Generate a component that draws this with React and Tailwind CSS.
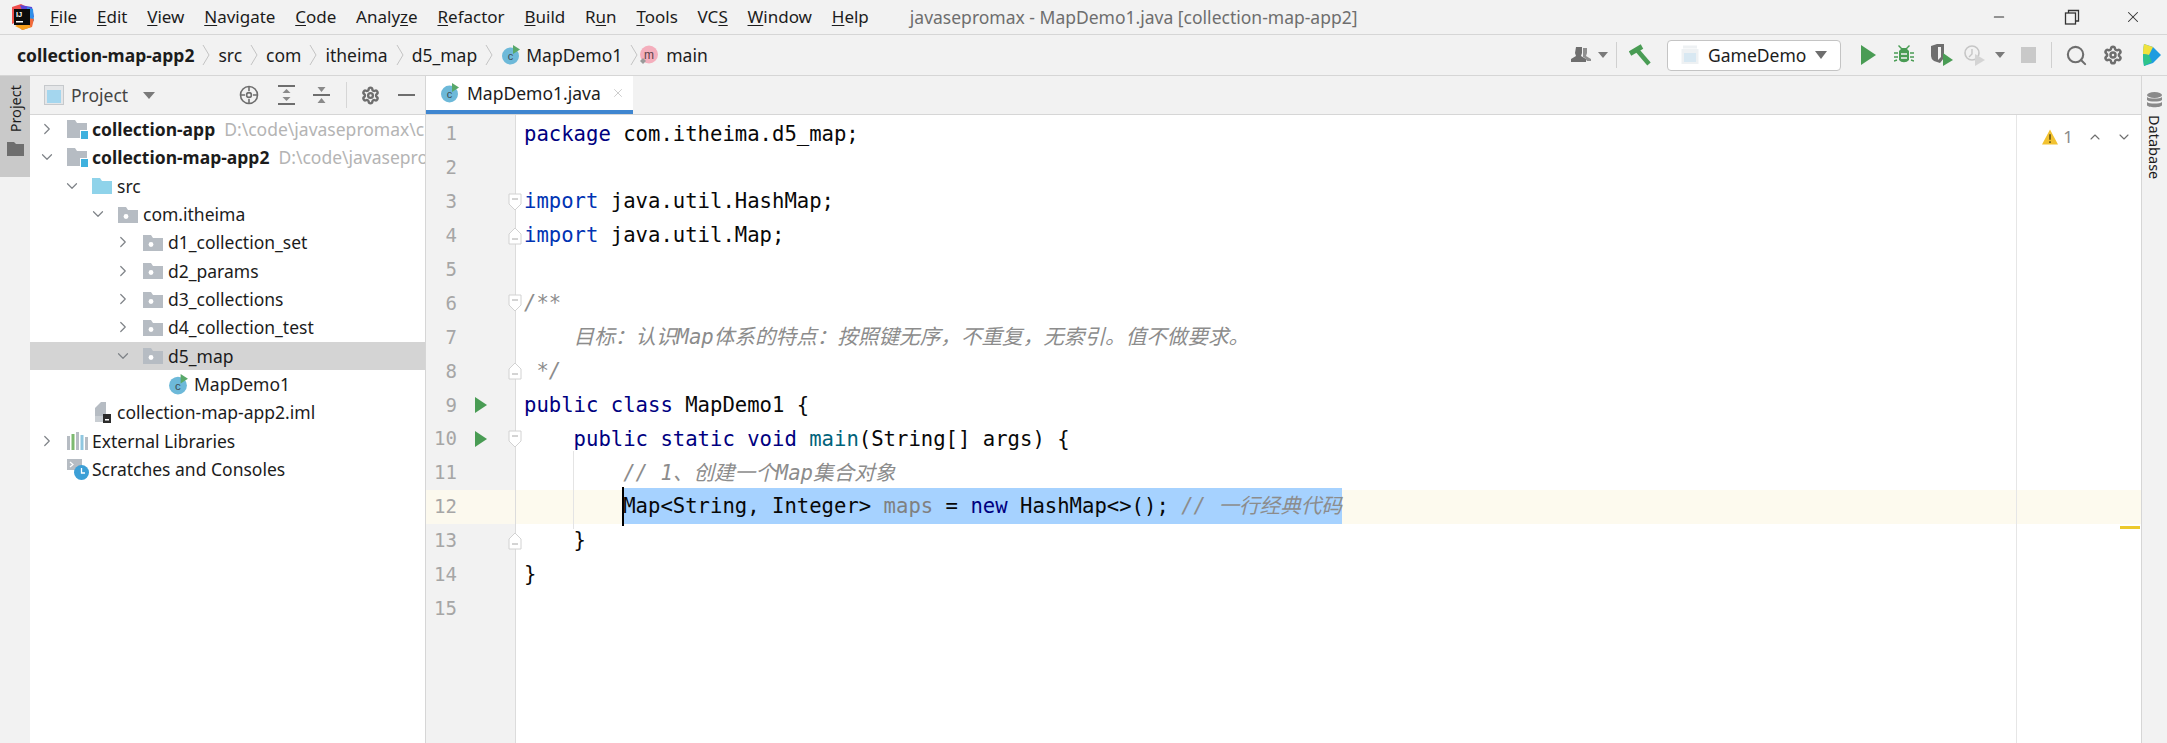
import React from "react";
import { ChevronRight, ChevronDown, ChevronUp, Search, Settings, X, Minus } from "lucide-react";

const uiFont = "font-['Noto_Sans','Noto_Sans_CJK_SC',sans-serif]";
const codeFont = "font-['DejaVu_Sans_Mono','Noto_Sans_CJK_SC',monospace]";

const menus = [
  ["", "F", "ile"],
  ["", "E", "dit"],
  ["", "V", "iew"],
  ["", "N", "avigate"],
  ["", "C", "ode"],
  ["Analy", "z", "e"],
  ["", "R", "efactor"],
  ["", "B", "uild"],
  ["R", "u", "n"],
  ["", "T", "ools"],
  ["VC", "S", ""],
  ["", "W", "indow"],
  ["", "H", "elp"],
];

const ClassIcon = ({ letter = "c", size = 20, fill = "#6db9d9", mark = true }) => (
  <svg width={size} height={size} viewBox="0 0 20 20" className="shrink-0">
    <circle cx="9.5" cy="11" r="8.5" fill={fill} />
    <text x="9.5" y="15" textAnchor="middle" fontSize="11" fontFamily="Liberation Sans" fill="#3d4b52">
      {letter}
    </text>
    {mark && <path d="M12 0l7 4.5-7 4.5z" fill="#59a869" />}
  </svg>
);

const Folder = ({ color = "#b6bcc3", dot = true }) => (
  <svg width="20" height="17" viewBox="0 0 20 17" className="shrink-0">
    <path d="M0 1h8l2 3h10v13H0z" fill={color} />
    {dot && <circle cx="8" cy="10.5" r="2.4" fill="#fff" />}
  </svg>
);

const ModuleFolder = () => (
  <svg width="21" height="20" viewBox="0 0 21 20" className="shrink-0">
    <path d="M0 1h8l2 3h10v9H13v6H0z" fill="#b6bcc3" />
    <rect x="13" y="11" width="8" height="8" fill="#fff" />
    <rect x="14" y="12" width="8" height="8" fill="#3fb1de" />
  </svg>
);

const treeRows = [
  { depth: 0, arrow: "right", icon: "module", name: "collection-app", bold: true, path: "D:\\code\\javasepromax\\collection-app" },
  { depth: 0, arrow: "down", icon: "module", name: "collection-map-app2", bold: true, path: "D:\\code\\javasepromax\\collection-map-app2" },
  { depth: 1, arrow: "down", icon: "src", name: "src" },
  { depth: 2, arrow: "down", icon: "pkg", name: "com.itheima" },
  { depth: 3, arrow: "right", icon: "pkg", name: "d1_collection_set" },
  { depth: 3, arrow: "right", icon: "pkg", name: "d2_params" },
  { depth: 3, arrow: "right", icon: "pkg", name: "d3_collections" },
  { depth: 3, arrow: "right", icon: "pkg", name: "d4_collection_test" },
  { depth: 3, arrow: "down", icon: "pkg", name: "d5_map", selected: true },
  { depth: 4, icon: "class", name: "MapDemo1", inset: true },
  { depth: 1, icon: "iml", name: "collection-map-app2.iml" },
  { depth: 0, arrow: "right", icon: "libs", name: "External Libraries" },
  { depth: 0, icon: "scratch", name: "Scratches and Consoles" },
];

const depthPad = ["pl-[7px]", "pl-[32px]", "pl-[58px]", "pl-[83px]", "pl-[83px]"];

const TreeIcon = ({ type }) => {
  if (type === "module") return <ModuleFolder />;
  if (type === "src") return <Folder color="#8fd3ea" dot={false} />;
  if (type === "pkg") return <Folder />;
  if (type === "class") return <ClassIcon size={21} />;
  if (type === "iml")
    return (
      <svg width="20" height="21" viewBox="0 0 20 21" className="shrink-0">
        <path d="M3 6l6-6h5v14H3z" fill="#b6bcc3" />
        <path d="M3 14h8v6H3z" fill="#c9ced3" />
        <rect x="11" y="12" width="8" height="9" fill="#2b2b2b" />
        <rect x="13" y="17" width="4" height="1.5" fill="#fff" />
      </svg>
    );
  if (type === "libs")
    return (
      <svg width="21" height="18" viewBox="0 0 21 18" className="shrink-0">
        <rect x="0" y="4" width="3" height="14" fill="#b6bcc3" />
        <rect x="4.5" y="2" width="3" height="16" fill="#7cb96f" />
        <rect x="9" y="0" width="3" height="18" fill="#b6bcc3" />
        <rect x="13.5" y="3" width="3" height="15" fill="#8fc7e0" />
        <rect x="18" y="5" width="3" height="13" fill="#b6bcc3" />
      </svg>
    );
  return (
    <svg width="22" height="21" viewBox="0 0 22 21" className="shrink-0">
      <rect x="0" y="0" width="15" height="11" fill="#b6bcc3" />
      <path d="M3 3l3 2.5L3 8" fill="none" stroke="#fff" strokeWidth="1.2" />
      <circle cx="14.5" cy="13.5" r="7.5" fill="#3c9fd6" />
      <path d="M14.5 9v5h3.5" fill="none" stroke="#fff" strokeWidth="1.3" />
    </svg>
  );
};

const TreeRow = ({ row }) => (
  <div
    className={`flex h-[28.33px] items-center whitespace-nowrap ${depthPad[row.depth]} ${
      row.selected ? "bg-[#d4d4d4]" : ""
    }`}
  >
    <div className={`flex shrink-0 justify-center ${row.inset ? "ml-[25px] w-[30px]" : "w-[20px]"}`}>
      {row.arrow === "right" && <ChevronRight size={18} strokeWidth={1.6} className="text-[#7f8388]" />}
      {row.arrow === "down" && <ChevronDown size={18} strokeWidth={1.6} className="text-[#7f8388]" />}
    </div>
    <div className={`flex shrink-0 ${row.inset ? "w-[26px]" : "ml-[10px] w-[25px]"}`}>
      <TreeIcon type={row.icon} />
    </div>
    <span className={`text-[17.5px] text-[#1c1c1c] ${row.bold ? "font-bold" : ""}`}>{row.name}</span>
    {row.path && <span className="ml-[9px] text-[17.5px] text-[#b4b4b4]">{row.path}</span>}
  </div>
);

const Kw = ({ children }) => <span className="text-[#000080]">{children}</span>;
const Imp = ({ children }) => <span className="text-[#0033b3]">{children}</span>;
const Doc = ({ children }) => <span className="italic text-[#8c8c8c]">{children}</span>;

const lines = [
  { code: <><Kw>package</Kw> com.itheima.d5_map;</> },
  { code: null },
  { code: <><Imp>import</Imp> java.util.HashMap;</>, fold: "open" },
  { code: <><Imp>import</Imp> java.util.Map;</>, fold: "close" },
  { code: null },
  { code: <Doc>/**</Doc>, fold: "open" },
  // full-width colon and comma, as in the source comment
  { code: <Doc>{"    目标\uFF1A认识Map体系的特点\uFF1A按照键无序\uFF0C不重复\uFF0C无索引。值不做要求。"}</Doc> },
  { code: <Doc>{" */"}</Doc>, fold: "close" },
  { code: <><Kw>public class</Kw> MapDemo1 {"{"}</>, run: true },
  {
    code: (
      <>
        {"    "}
        <Kw>public static void</Kw> <span className="text-[#00627a]">main</span>(String[] args) {"{"}
      </>
    ),
    run: true,
    fold: "open",
  },
  { code: <span className="italic text-[#8c8c8c]">{"        // 1、创建一个Map集合对象"}</span>, guide: true },
  {
    current: true,
    guide: true,
    code: (
      <>
        {"        "}
        <span className="bg-[#a6d2ff] py-[6px]">
          Map&lt;String, Integer&gt; <span className="text-[#808080]">maps</span> = <Kw>new</Kw> HashMap&lt;&gt;();{" "}
          <span className="italic text-[#8c8c8c]">// 一行经典代码</span>
        </span>
      </>
    ),
  },
  { code: <>{"    }"}</>, fold: "close" },
  { code: <>{"}"}</> },
  { code: null },
];

const FoldMark = ({ type }) => (
  <svg width="14" height="18" viewBox="0 0 14 18" className="absolute right-[-7px] z-10">
    {type === "open" ? (
      <path d="M1 1h12v10l-6 6-6-6z" fill="#fff" stroke="#d2d2d2" />
    ) : (
      <path d="M1 17h12V7L7 1 1 7z" fill="#fff" stroke="#d2d2d2" />
    )}
    <path d={type === "open" ? "M4 6h6" : "M4 12h6"} stroke="#a8a8a8" />
  </svg>
);

const CodeLine = ({ no, line }) => (
  <div className={`flex h-[33.9px] shrink-0 items-center ${line.current ? "bg-[#fdfaee]" : ""}`}>
    <div
      className={`relative flex h-full w-[90px] shrink-0 items-center border-r border-[#dcdcdc] ${
        line.current ? "bg-[#fcf9ee]" : "bg-[#f2f2f2]"
      }`}
    >
      <span className="w-[31px] text-right text-[19px] leading-none text-[#a6a6a6]">{no}</span>
      {line.run && (
        <svg width="12" height="16" viewBox="0 0 12 16" className="ml-[18px]">
          <path d="M0 0l12 8-12 8z" fill="#499c54" />
        </svg>
      )}
      {line.fold && <FoldMark type={line.fold} />}
    </div>
    <div className="relative ml-[8px] whitespace-pre text-[20.6px] leading-none text-[#080808]">
      {line.guide && <div className="absolute bottom-[-12px] left-[49px] top-[-12px] w-px bg-[#e4e4e4]" />}
      {line.current && <div className="absolute bottom-[-9px] left-[98px] top-[-9px] z-10 w-[2px] bg-black" />}
      <span className="relative">{line.code}</span>
    </div>
  </div>
);

function Crumb() {
  return (
    <svg width="8" height="22" viewBox="0 0 8 22" className="mx-[8px] shrink-0" fill="none" stroke="#c4c4c4">
      <path d="M1 1l6 10-6 10" />
    </svg>
  );
}

export default function App() {
  return (
    <div className={`flex h-[743px] w-[2167px] flex-col overflow-hidden bg-[#f2f2f2] text-[#1c1c1c] ${uiFont}`}>
      {/* Menu bar */}
      <div className="relative flex h-[35px] shrink-0 items-center border-b border-[#d6d6d6]">
        <svg width="24" height="26" viewBox="0 0 24 26" className="ml-[10px]">
          <path d="M2 3l9-3 6 3-4 12-11 5z" fill="#f0504f" />
          <path d="M10 1l12 2 2 10-8 4z" fill="#5b46d8" />
          <path d="M17 3l6 2 1 12-6 2z" fill="#2e8fe8" />
          <path d="M2 16l10 10 10-3 2-8-12-2z" fill="#f06a3a" />
          <path d="M5 22l8 4 8-3-6-6z" fill="#f9a01c" />
          <rect x="4" y="5" width="16" height="16" fill="#0b0b0b" />
          <text x="6" y="13" fontSize="7.5" fontWeight="700" fontFamily="Liberation Sans" fill="#fff">IJ</text>
          <rect x="6" y="17" width="7" height="1.5" fill="#fff" />
        </svg>
        <div className="ml-[16px] flex items-center gap-[19.8px] text-[17px]">
          {menus.map(([pre, key, post]) => (
            <span key={pre + key + post}>
              {pre}
              <span className="underline underline-offset-2">{key}</span>
              {post}
            </span>
          ))}
        </div>
        <span className="ml-[41px] text-[17.5px] text-[#6e6e6e]">javasepromax - MapDemo1.java [collection-map-app2]</span>
        <div className="ml-auto flex items-center">
          <Minus size={16} strokeWidth={1.6} className="text-[#333]" />
          <svg width="16" height="16" viewBox="0 0 16 16" className="ml-[57px]" fill="none" stroke="#333" strokeWidth="1.3">
            <rect x="1.5" y="4" width="10" height="11" />
            <path d="M4.5 4V1.5h10V12h-3" />
          </svg>
          <X size={18} strokeWidth={1.4} className="ml-[44px] mr-[25px] text-[#333]" />
        </div>
      </div>

      {/* Navigation bar */}
      <div className="flex h-[41px] shrink-0 items-center border-b border-[#d6d6d6] pl-[17px] text-[17.5px]">
        <span className="font-bold">collection-map-app2</span>
        <Crumb />
        <span>src</span>
        <Crumb />
        <span>com</span>
        <Crumb />
        <span>itheima</span>
        <Crumb />
        <span>d5_map</span>
        <Crumb />
        <ClassIcon size={20} />
        <span className="ml-[5px]">MapDemo1</span>
        <Crumb />
        <svg width="20" height="20" viewBox="0 0 20 20" className="-ml-[7px] shrink-0">
          <circle cx="10" cy="9.5" r="9" fill="#f4aebc" />
          <text x="10" y="14" textAnchor="middle" fontSize="12" fontFamily="Liberation Sans" fill="#5a4148">m</text>
          <path d="M4 13l3 3-3 3-3-3z" fill="#9a9a9a" />
        </svg>
        <span className="ml-[7px]">main</span>

        <div className="ml-auto flex items-center">
          <svg width="21" height="20" viewBox="0 0 21 20">
            <path d="M5 2h6v6l-1 3 5 3v3H0v-3l5-3-1-3z" fill="#6e6e6e" />
            <path d="M12 3h4v5l-1 3 5 3v2h-4l-2-3-2-1z" fill="#8f8f8f" />
          </svg>
          <svg width="10" height="6" viewBox="0 0 10 6" className="ml-[6px]"><path d="M0 0h10L5 6z" fill="#7a7a7a" /></svg>
          <div className="ml-[8px] h-[26px] w-px bg-[#d0d0d0]" />
          <svg width="22" height="22" viewBox="0 0 22 22" className="ml-[12px]" fill="none" stroke="#499c54">
            <path d="M1 9.5L13 2.5" strokeWidth="5" />
            <path d="M8 6l12 14" strokeWidth="4.5" />
          </svg>
          <div className="ml-[16px] flex h-[31px] w-[174px] items-center rounded-[4px] border border-[#c4c4c4] bg-white">
            <svg width="18" height="20" viewBox="0 0 18 20" className="ml-[13px]">
              <rect x="2" y="0.5" width="14" height="3" fill="#eef1f3" />
              <rect x="0.5" y="4" width="17" height="15" fill="#eef1f3" />
              <rect x="3" y="8" width="12" height="9" fill="#d8e8f2" />
            </svg>
            <span className="ml-[9px] text-[17.5px]">GameDemo</span>
            <svg width="12" height="8" viewBox="0 0 12 8" className="ml-auto mr-[13px]"><path d="M0 0h12L6 8z" fill="#6e6e6e" /></svg>
          </div>
          <svg width="15" height="20" viewBox="0 0 15 20" className="ml-[20px]"><path d="M0 0l15 10L0 20z" fill="#499c54" /></svg>
          <svg width="20" height="20" viewBox="0 0 20 20" className="ml-[18px]">
            <path d="M5 0l3 3h4l3-3 1 1-3 3 2 2v9a6 5 0 01-10 0V6l2-2-3-3z" fill="#499c54" />
            <path d="M0 8h4M0 12h4M0 16l3-1M16 8h4M16 12h4M20 16l-3-1" stroke="#499c54" strokeWidth="1.6" />
            <path d="M7 9h6M7 13h6" stroke="#f2f2f2" strokeWidth="1.6" />
          </svg>
          <svg width="23" height="22" viewBox="0 0 23 22" className="ml-[17px]">
            <path d="M0 2l6-2h7v14l-4 5-6-2q-3-2-3-5z" fill="#6e6e6e" />
            <path d="M7 3h3v10l-3 3z" fill="#f2f2f2" />
            <path d="M12 9l10 7-10 6z" fill="#499c54" />
          </svg>
          <svg width="21" height="22" viewBox="0 0 21 22" className="ml-[10px]" fill="none">
            <circle cx="8" cy="9" r="7" stroke="#c6c6c6" strokeWidth="1.6" />
            <path d="M8 5v5l-3 3" stroke="#c6c6c6" strokeWidth="1.4" />
            <path d="M11 10l10 6-10 6z" fill="#d4d4d4" />
          </svg>
          <svg width="10" height="6" viewBox="0 0 10 6" className="ml-[10px]"><path d="M0 0h10L5 6z" fill="#7a7a7a" /></svg>
          <div className="ml-[16px] h-[16px] w-[15px] bg-[#c9c9c9]" />
          <div className="ml-[15px] h-[26px] w-px bg-[#d0d0d0]" />
          <Search size={23} strokeWidth={2.2} className="ml-[13px] text-[#6e6e6e]" />
          <Settings size={20} strokeWidth={3} className="ml-[15px] text-[#6e6e6e]" />
          <svg width="20" height="22" viewBox="0 0 20 22" className="ml-[18px] mr-[6px]">
            <path d="M3 0l9 3 8 8-8 8-9 3q-2-11 0-22z" fill="#1f9ce0" />
            <path d="M3 0l9 3-4 8-6-1q0-6 1-10z" fill="#f0e23c" />
            <path d="M2 10l6 1 3 7-8 4q-1-6-1-12z" fill="#2ec48a" />
          </svg>
        </div>
      </div>

      {/* Main area */}
      <div className="flex min-h-0 flex-1">
        {/* Left tool strip */}
        <div className="w-[30px] shrink-0">
          <div className="flex h-[101px] flex-col items-center bg-[#c9c9c9] pt-[9px]">
            <span className="rotate-180 text-[14.5px] leading-none [writing-mode:vertical-rl]">Project</span>
            <svg width="17" height="14" viewBox="0 0 17 14" className="mt-[10px]">
              <path d="M0 0h7l2 2h8v12H0z" fill="#6e6e6e" />
            </svg>
          </div>
        </div>

        {/* Project panel */}
        <div className="flex w-[395px] shrink-0 flex-col overflow-hidden bg-white">
          <div className="flex h-[39px] shrink-0 items-center border-b border-[#d6d6d6] bg-[#f2f2f2] pl-[14px]">
            <svg width="20" height="20" viewBox="0 0 20 20" className="shrink-0">
              <rect x="0.5" y="0.5" width="19" height="19" fill="#e4e6e8" stroke="#c6c9cc" />
              <rect x="3" y="5" width="14" height="13" fill="#a4d6ee" />
            </svg>
            <span className="ml-[7px] text-[17.5px] text-[#444]">Project</span>
            <svg width="12" height="7" viewBox="0 0 12 7" className="ml-[15px]"><path d="M0 0h12L6 7z" fill="#7a7a7a" /></svg>
            <svg width="20" height="20" viewBox="0 0 20 20" className="ml-[84px]" fill="none" stroke="#6e6e6e" strokeWidth="1.6">
              <circle cx="10" cy="10" r="8.5" />
              <circle cx="10" cy="10" r="2.4" />
              <path d="M10 1v5M10 14v5M1 10h5M14 10h5" />
            </svg>
            <svg width="17" height="20" viewBox="0 0 17 20" className="ml-[19px]">
              <path d="M0 1h17M0 19h17" stroke="#6e6e6e" strokeWidth="2" />
              <path d="M8.5 4l4 4h-8zM8.5 16l4-4h-8z" fill="#8a8a8a" />
            </svg>
            <svg width="17" height="20" viewBox="0 0 17 20" className="ml-[18px]">
              <path d="M0 10h17" stroke="#6e6e6e" strokeWidth="2" />
              <path d="M8.5 7l4-5h-8zM8.5 13l4 5h-8z" fill="#8a8a8a" />
            </svg>
            <div className="ml-[16px] h-[26px] w-px bg-[#d6d6d6]" />
            <Settings size={19} strokeWidth={3} className="ml-[14px] text-[#6e6e6e]" />
            <div className="ml-[18px] h-[2px] w-[17px] bg-[#6e6e6e]" />
          </div>
          <div className="flex-1 overflow-hidden">
            {treeRows.map((row) => (
              <TreeRow key={row.name} row={row} />
            ))}
          </div>
        </div>

        {/* Editor column */}
        <div className="flex min-w-0 flex-1 flex-col border-l border-[#d6d6d6]">
          <div className="flex h-[39px] shrink-0 border-b border-[#d6d6d6]">
            <div className="flex w-[207px] items-center border-b-[4px] border-[#3f86d0] bg-white pl-[14px]">
              <ClassIcon size={20} />
              <span className="ml-[7px] text-[17.5px]">MapDemo1.java</span>
              <X size={14} strokeWidth={1.2} className="ml-[10px] text-[#b8b8b8]" />
            </div>
          </div>
          <div className="relative flex min-h-0 flex-1 flex-col overflow-hidden bg-white">
            <div className="h-[2px] w-[90px] shrink-0 border-r border-[#dcdcdc] bg-[#f2f2f2]" />
            <div className={`flex flex-col ${codeFont}`}>
              {lines.map((line, i) => (
                <CodeLine key={i} no={i + 1} line={line} />
              ))}
            </div>
            <div className="w-[90px] flex-1 border-r border-[#dcdcdc] bg-[#f2f2f2]" />
            {/* Right margin guide */}
            <div className="absolute bottom-0 right-[124px] top-0 w-px bg-[#e6e6e6]" />
            <div className="absolute right-[9px] top-[9px] flex items-center">
              <svg width="16" height="16" viewBox="0 0 17 16"><path d="M8.5 0L17 16H0z" fill="#f2c230" /><path d="M8.5 5v6M8.5 12.5v2" stroke="#5a4a10" strokeWidth="1.6" /></svg>
              <span className="ml-[5px] text-[17px] text-[#8a8a8a]">1</span>
              <ChevronUp size={16} strokeWidth={1.6} className="ml-[14px] text-[#6e6e6e]" />
              <ChevronDown size={16} strokeWidth={1.6} className="ml-[13px] text-[#6e6e6e]" />
            </div>
            <div className="absolute right-[1px] top-[411px] h-[3px] w-[20px] bg-[#ecc92d]" />
          </div>
        </div>

        {/* Right tool strip */}
        <div className="flex w-[26px] shrink-0 flex-col items-center border-l border-[#d6d6d6] pt-[16px]">
          <svg width="15" height="16" viewBox="0 0 15 16">
            <ellipse cx="7.5" cy="3" rx="7.5" ry="3" fill="#8a8a8a" />
            <path d="M0 5c2 2 13 2 15 0v3c-2 2-13 2-15 0zM0 10c2 2 13 2 15 0v3c0 3-15 3-15 0z" fill="#8a8a8a" />
          </svg>
          <span className="mt-[7px] text-[14.5px] leading-none [writing-mode:vertical-rl]">Database</span>
        </div>
      </div>
    </div>
  );
}
